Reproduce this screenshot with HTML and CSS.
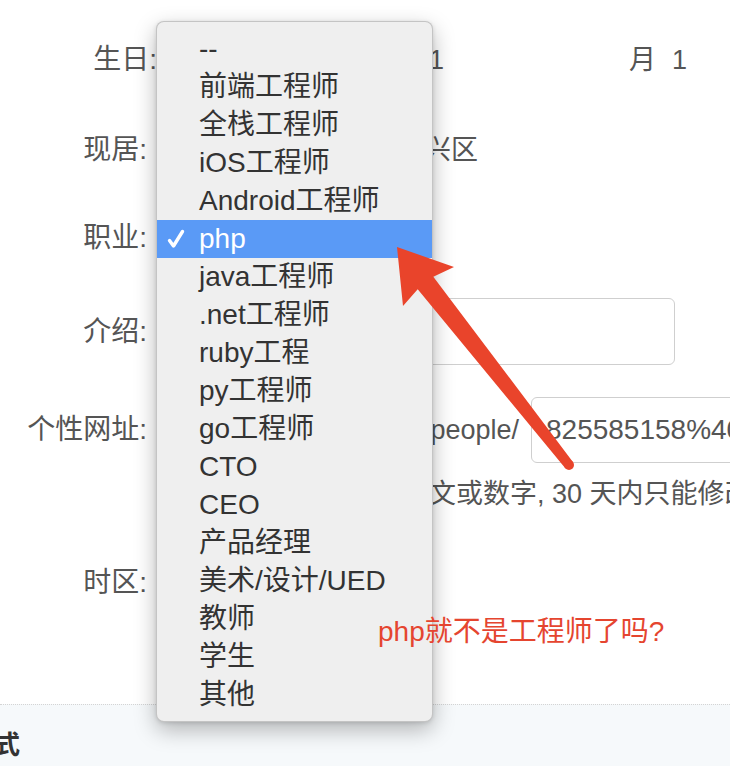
FILE: index.html
```html
<!DOCTYPE html>
<html lang="zh-CN">
<head>
<meta charset="utf-8">
<title>个人资料</title>
<link rel="stylesheet" href="styles.css">
</head>
<body>
<div class="page">
  <div class="form">
    <div class="row r1">
      <div class="label label-birth">生日:</div>
      <div class="field">
        <span class="year">1</span><span class="month">月</span><span class="day">1</span>
      </div>
    </div>
    <div class="row r2">
      <div class="label">现居:</div>
      <div class="field"><span class="city">大兴区</span></div>
    </div>
    <div class="row r3">
      <div class="label">职业:</div>
      <div class="field"></div>
    </div>
    <div class="row r4">
      <div class="label">介绍:</div>
      <div class="field"><div class="textbox intro"></div></div>
    </div>
    <div class="row r5">
      <div class="label">个性网址:</div>
      <div class="field">
        <span class="url-prefix">zhihu.com/people/</span>
        <div class="textbox url">825585158%40</div>
      </div>
    </div>
    <div class="row r6">
      <div class="label"></div>
      <div class="field"><span class="hint">只能包含英文或数字, 30 天内只能修改一次</span></div>
    </div>
    <div class="row r7">
      <div class="label">时区:</div>
      <div class="field"></div>
    </div>
  </div>
  <div class="section">
    <h3 class="section-title">联系方式</h3>
  </div>

  <ul class="menu">
    <li class="item"><span class="mark"></span>--</li>
    <li class="item"><span class="mark"></span>前端工程师</li>
    <li class="item"><span class="mark"></span>全栈工程师</li>
    <li class="item"><span class="mark"></span>iOS工程师</li>
    <li class="item"><span class="mark"></span>Android工程师</li>
    <li class="item selected"><span class="mark"><svg class="check" width="18" height="20" viewBox="0 0 18 20"><polyline points="2.5,11.5 6.5,17 15.5,2.5" fill="none" stroke="#fff" stroke-width="3.4" stroke-linecap="round" stroke-linejoin="round"/></svg></span>php</li>
    <li class="item"><span class="mark"></span>java工程师</li>
    <li class="item"><span class="mark"></span>.net工程师</li>
    <li class="item"><span class="mark"></span>ruby工程</li>
    <li class="item"><span class="mark"></span>py工程师</li>
    <li class="item"><span class="mark"></span>go工程师</li>
    <li class="item"><span class="mark"></span>CTO</li>
    <li class="item"><span class="mark"></span>CEO</li>
    <li class="item"><span class="mark"></span>产品经理</li>
    <li class="item"><span class="mark"></span>美术/设计/UED</li>
    <li class="item"><span class="mark"></span>教师</li>
    <li class="item"><span class="mark"></span>学生</li>
    <li class="item"><span class="mark"></span>其他</li>
  </ul>

  <div class="note">php就不是工程师了吗?</div>

  <svg class="arrow" width="730" height="766" viewBox="0 0 730 766">
    <polygon points="397,247 454,267 433.3,276.8 572.9,461.9 565.1,468.1 417.7,289.2 403,306" fill="#e9442b"/>
    <circle cx="569" cy="465" r="5" fill="#e9442b"/>
  </svg>
</div>
</body>
</html>
```

FILE: styles.css
```css
* { box-sizing: border-box; }
html, body { margin: 0; padding: 0; background: #fff; }
body {
  font-family: "Liberation Sans", "Noto Sans CJK SC", sans-serif;
  color: #555;
}
.page {
  position: relative;
  width: 730px;
  height: 766px;
  overflow: hidden;
}
.form {
  height: 704px;
  padding-top: 40px;
}
.row {
  display: flex;
  align-items: center;
  font-size: 27px;
  line-height: 40px;
  white-space: nowrap;
}
.label {
  width: 160px;
  flex: none;
  text-align: right;
  padding-right: 13px;
  font-size: 28px;
  color: #555;
}
.label-birth { padding-right: 3px; }
.field {
  flex: 1;
  display: flex;
  align-items: center;
  min-width: 0;
}
.r1 { height: 40px; }
.r2 { height: 40px; margin-top: 50px; }
.r3 { height: 40px; margin-top: 48px; }
.r4 { height: 67px; margin-top: 40px; }
.r5 { height: 66px; margin-top: 32px; }
.r6 { height: 32px; margin-top: 15px; }
.r7 { height: 40px; margin-top: 53px; }

.year { margin-left: 269px; }
.month { margin-left: 185px; }
.day { margin-left: 16px; }
.city { margin-left: 237px; }

.textbox {
  background: #fff;
  border: 1.5px solid #cfcfcf;
  border-radius: 6px;
}
.intro {
  margin-left: 15px;
  width: 500px;
  height: 67px;
}
.url-prefix {
  width: 359px;
  flex: none;
  text-align: right;
}
.url {
  margin-left: 12px;
  width: 280px;
  height: 66px;
  flex: none;
  padding-left: 14px;
  line-height: 63px;
  font-size: 28px;
  color: #555;
  overflow: hidden;
}
.hint { margin-left: 134px; }

.section {
  height: 62px;
  border-top: 1.5px dotted #d4d4d4;
  background: #f6f9fb;
  padding-top: 20px;
}
.section-title {
  margin: 0 0 0 -84px;
  font-size: 26px;
  line-height: 40px;
  font-weight: bold;
  color: #333;
  white-space: nowrap;
}

.menu {
  position: absolute;
  left: 156px;
  top: 21px;
  width: 277px;
  height: 701px;
  margin: 0;
  padding: 8px 0 0;
  list-style: none;
  background: #efefef;
  border: 1px solid rgba(0, 0, 0, 0.18);
  border-radius: 8px;
  box-shadow: 0 8px 22px rgba(0, 0, 0, 0.28), 0 1px 4px rgba(0, 0, 0, 0.12);
  font-size: 28px;
  color: #333;
  overflow: hidden;
}
.item {
  display: flex;
  align-items: center;
  height: 38px;
  line-height: 38px;
  white-space: nowrap;
}
.mark {
  width: 42px;
  flex: none;
  display: flex;
  align-items: center;
  padding-left: 10px;
}
.selected {
  background: #5a9af6;
  color: #fff;
}
.check { display: block; }

.note {
  position: absolute;
  left: 378px;
  top: 612px;
  font-size: 28px;
  line-height: 40px;
  color: #e5452f;
  white-space: nowrap;
}
.arrow {
  position: absolute;
  left: 0;
  top: 0;
  pointer-events: none;
}
```
